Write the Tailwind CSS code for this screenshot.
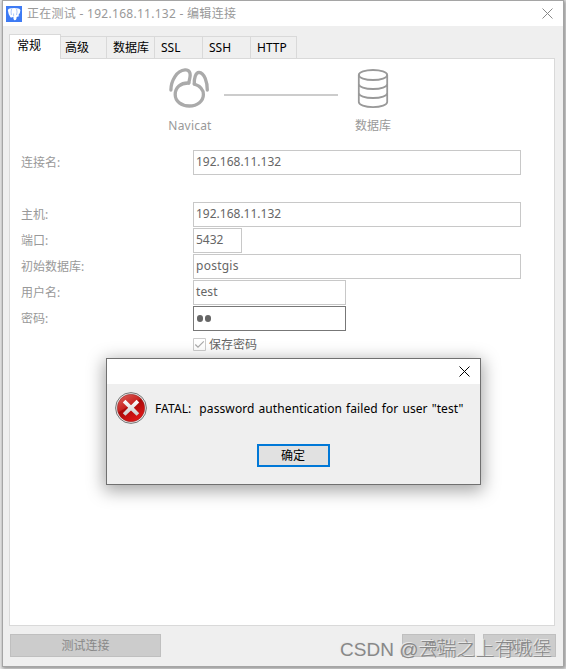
<!DOCTYPE html>
<html lang="zh-CN">
<head>
  <meta charset="UTF-8" />
  <meta name="viewport" content="width=device-width, initial-scale=1.0" />
  <title>正在测试 - 192.168.11.132 - 编辑连接</title>
  <script src="https://cdn.jsdelivr.net/npm/@tailwindcss/browser@4"></script>
</head>
<body class="h-[669px] w-[566px] overflow-hidden bg-[#f3f3f3] pl-[2px] font-['Noto_Sans','Noto_Sans_CJK_SC',sans-serif] text-[12px] leading-4 text-[#999]">
  <div class="relative flex h-[667px] w-[562px] flex-col border border-[#a5a5a5] bg-[#efefef] shadow-[1px_1px_4px_1px_rgba(0,0,0,0.4)]">
    <!-- title bar -->
    <header class="flex h-[25px] shrink-0 items-center bg-white pl-[3px] pr-[10px]">
      <svg class="h-4 w-4 shrink-0" viewBox="0 0 16 16">
        <rect width="16" height="16" fill="#3e7bf4" />
        <path d="M1.8 4Q2.6 1.8 6 2.3Q8 1.6 10 2.2Q13.8 1.8 14.4 4Q14.4 7 12.3 9.2L13.6 10L10.6 11Q10.8 14 8.8 14.2Q7.2 14 7.4 10.7Q6 11.8 4.4 11.2Q2.2 8 1.8 4Z" fill="#fff" />
        <path d="M5.6 3Q4.6 6 5.4 9M10.6 3Q11.6 6 10.5 9M7.6 7.5V10.2" fill="none" stroke="#8db2f8" stroke-width=".7" />
      </svg>
      <span class="ml-[5px] whitespace-pre tracking-[0.28px]">正在测试 - 192.168.11.132 - 编辑连接</span>
      <svg class="ml-auto h-[11px] w-[11px]" viewBox="0 0 11 11"><path d="M.5 .5L10.5 10.5M10.5 .5L.5 10.5" stroke="#888" /></svg>
    </header>

    <!-- tabs -->
    <nav class="mt-2 ml-[6px] flex h-6 shrink-0 items-end text-black">
      <div class="z-10 -mb-px h-[25px] w-[52px] border border-b-0 border-[#d9d9d9] bg-white pt-[3px] pl-[7px] self-start">常规</div>
      <div class="h-[22px] w-[46px] border-t border-r border-[#d9d9d9] pt-[3px] pl-1">高级</div>
      <div class="h-[22px] w-12 border-t border-r border-[#d9d9d9] pt-[3px] pl-[6px]">数据库</div>
      <div class="h-[22px] w-12 border-t border-r border-[#d9d9d9] pt-[3px] pl-[6px]">SSL</div>
      <div class="h-[22px] w-12 border-t border-r border-[#d9d9d9] pt-[3px] pl-[6px]">SSH</div>
      <div class="h-[22px] w-[46px] border-t border-r border-[#d9d9d9] pt-[3px] pl-[6px]">HTTP</div>
    </nav>

    <main class="ml-[6px] h-[568px] w-[546px] shrink-0 border border-[#d9d9d9] bg-white pl-[11px]">
      <!-- connection diagram -->
      <div class="flex h-[91px] pt-[9px]">
        <div class="ml-[140px] flex w-[58px] flex-col items-center">
          <svg class="h-[42px] w-[42px]" viewBox="0 0 42 42" fill="none" stroke="#aaa" stroke-width="3.3" stroke-linecap="round" stroke-linejoin="round">
            <path d="M19.8 15C11.5 14.6 6.2 19.5 6.2 26.5C6.2 33.5 12.5 38 20.3 38C28.5 38 34.4 33 34.4 26.5C34.4 21 31 18 25.3 16" />
            <path d="M1.9 22C2 13 7.5 2.5 16 1.9C20.3 1.6 21.8 5 20.9 9.5L19.8 15" />
            <path d="M25.3 16C25 11 26.5 4.3 30 4.3C35.5 4.8 38.3 14 38.3 22" />
          </svg>
          <span class="mt-2 tracking-[0.2px]">Navicat</span>
        </div>
        <div class="mt-[26px] ml-[5px] h-[2px] w-[114px] bg-[#ccc]"></div>
        <div class="ml-[15px] flex w-10 flex-col items-center">
          <svg class="mt-px h-10 w-8" viewBox="0 0 32 40" fill="none" stroke="#999" stroke-width="1.8">
            <ellipse cx="16" cy="6" rx="14.2" ry="5" />
            <path d="M1.8 6V33C1.8 35.8 8 38.2 16 38.2S30.2 35.8 30.2 33V6M1.8 15C1.8 17.8 8 20 16 20S30.2 17.8 30.2 15M1.8 24C1.8 26.8 8 29 16 29S30.2 26.8 30.2 24" />
          </svg>
          <span class="mt-[9px]">数据库</span>
        </div>
      </div>

      <!-- form -->
      <div class="flex flex-col gap-px text-[#666]">
        <div class="mb-[26px] flex h-[25px]">
          <label class="w-[172px] pt-[5px] text-[#999]">连接名:</label>
          <div class="w-[328px] border border-[#c8c8c8] pt-[3px] pl-[2px]">192.168.11.132</div>
        </div>
        <div class="flex h-[25px]">
          <label class="w-[172px] pt-[5px] text-[#999]">主机:</label>
          <div class="w-[328px] border border-[#c8c8c8] pt-[3px] pl-[2px]">192.168.11.132</div>
        </div>
        <div class="flex h-[25px]">
          <label class="w-[172px] pt-[5px] text-[#999]">端口:</label>
          <div class="w-[49px] border border-[#c8c8c8] pt-[3px] pl-[2px]">5432</div>
        </div>
        <div class="flex h-[25px]">
          <label class="w-[172px] pt-[5px] text-[#999]">初始数据库:</label>
          <div class="w-[328px] border border-[#c8c8c8] pt-[3px] pl-[2px] tracking-[0.25px]">postgis</div>
        </div>
        <div class="flex h-[25px]">
          <label class="w-[172px] pt-[5px] text-[#999]">用户名:</label>
          <div class="w-[153px] border border-[#c8c8c8] pt-[3px] pl-[2px] tracking-[0.1px]">test</div>
        </div>
        <div class="flex h-[25px]">
          <label class="w-[172px] pt-[5px] text-[#999]">密码:</label>
          <div class="flex w-[153px] items-center gap-[2px] border border-[#777] pb-px pl-[3px]">
            <i class="h-[7px] w-[6px] rounded-full bg-[#666]"></i>
            <i class="h-[7px] w-[6px] rounded-full bg-[#666]"></i>
          </div>
        </div>
        <div class="mt-[4px] ml-[172px] flex h-4 items-center">
          <svg class="h-[13px] w-[13px]" viewBox="0 0 13 13" fill="none"><path d="M.5 .5H12.5V12.5H.5Z" stroke="#ccc" /><path d="M2.3 6.5L5 9.2L10.8 3.4" stroke="#aaa" stroke-width="1.2" /></svg>
          <span class="mt-[2px] ml-[3px]">保存密码</span>
        </div>
      </div>
    </main>

    <!-- bottom buttons -->
    <footer class="mt-2 ml-[7px] flex h-[23px] text-[#888]">
      <div class="w-[151px] border border-[#bfbfbf] bg-[#ccc] pt-[3px] text-center">测试连接</div>
      <div class="ml-[241px] w-[73px] border border-[#bfbfbf] bg-[#ccc] pt-[3px] pr-1 text-center">确定</div>
      <div class="ml-[8px] w-[73px] border border-[#bfbfbf] bg-[#ccc] pt-[3px] pr-1 text-center">取消</div>
    </footer>
  </div>

  <!-- error dialog -->
  <div class="absolute top-[358px] left-[106px] z-20 h-[127px] w-[375px] border border-[#707070] bg-[#efefef] text-black shadow-[0_4px_16px_2px_rgba(0,0,0,0.35)]">
    <div class="flex h-[25px] items-center justify-end bg-white pr-[10px]">
      <svg class="h-[11px] w-[11px]" viewBox="0 0 11 11"><path d="M.5 .5L10.5 10.5M10.5 .5L.5 10.5" stroke="#000" /></svg>
    </div>
    <div class="flex h-12 items-center pl-2">
      <svg class="h-8 w-8 shrink-0" viewBox="0 0 32 32">
        <defs>
          <linearGradient id="red" x1="0" y1="0" x2=".6" y2="1"><stop offset="0" stop-color="#df6560" /><stop offset=".48" stop-color="#c92522" /><stop offset=".52" stop-color="#a90909" /><stop offset="1" stop-color="#df1616" /></linearGradient>
          <linearGradient id="cross" x1="0" y1="0" x2="0" y2="1"><stop offset="0" stop-color="#fff" /><stop offset="1" stop-color="#ccc" /></linearGradient>
        </defs>
        <circle cx="16" cy="16" r="15.4" fill="#e8e8e8" stroke="#777" />
        <circle cx="16" cy="16" r="13.7" fill="url(#red)" stroke="#8e2727" stroke-width=".5" />
        <path d="M10.4 7.8L16 13.2L21.6 7.8L24.2 10.4L18.8 15.8L24.2 21.2L21.6 23.8L16 18.4L10.4 23.8L7.8 21.2L13.2 15.8L7.8 10.4Z" fill="url(#cross)" />
      </svg>
      <span class="mt-[2px] ml-2 whitespace-pre tracking-[0.1px] [word-spacing:0.75px]">FATAL:  password authentication failed for user "test"</span>
    </div>
    <div class="mt-3 ml-[150px] h-[23px] w-[73px] border-2 border-[#0078d7] bg-[#e1e1e1] pt-[2px] pr-px text-center">确定</div>
  </div>

  <!-- watermark -->
  <div class="absolute top-[636px] left-[340px] z-30 font-['Liberation_Sans','Noto_Sans_CJK_SC',sans-serif] text-[19px] leading-7 font-light tracking-[0.05px] whitespace-nowrap text-[#888] [text-shadow:-1px_-1px_0_#e8e8e8]">CSDN @云端之上有城堡</div>
</body>
</html>
